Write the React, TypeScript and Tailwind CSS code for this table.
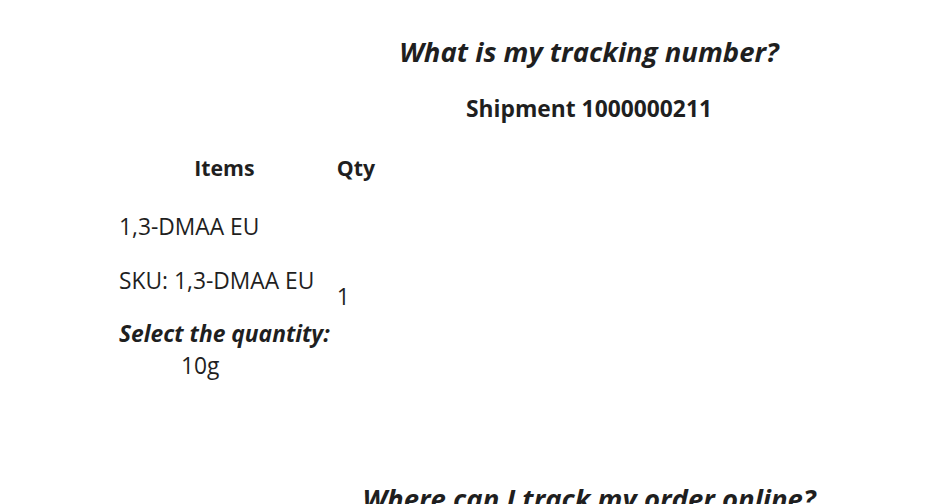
import React from 'react';

const item = {
  name: '1,3-DMAA EU',
  sku: '1,3-DMAA EU',
  option: 'Select the quantity:',
  value: '10g',
  qty: 1,
};

export default function App() {
  return (
    <div className="h-screen overflow-hidden bg-white text-[#1f1f1f] font-['Open_Sans',sans-serif]">
      <div className="pl-[226px] pt-[32px] text-center">
        <h2 className="text-[27.5px] leading-[40px] font-bold italic">What is my tracking number?</h2>
        <h3 className="mt-[22px] text-[22.8px] leading-[30px] font-bold">Shipment 1000000211</h3>
      </div>

      <table className="ml-[119px] mt-[29px] border-collapse">
        <thead>
          <tr>
            <th className="pb-[28px] text-[21.3px] leading-[30px] font-bold">Items</th>
            <th className="pl-[7px] pb-[28px] text-[21.3px] leading-[30px] font-bold">Qty</th>
          </tr>
        </thead>
        <tbody>
          <tr>
            <td className="p-0 align-middle text-[22.8px] leading-[32px]">
              <p>{item.name}</p>
              <p className="mt-[22px]">SKU: {item.sku}</p>
              <p className="mt-[21px] font-bold italic">{item.option}</p>
              <p className="pl-[62px]">{item.value}</p>
            </td>
            <td className="pl-[7px] align-middle text-[22.8px] leading-[32px]">{item.qty}</td>
          </tr>
        </tbody>
      </table>

      <div className="pl-[226px] mt-[97px] text-center">
        <h2 className="text-[27.5px] leading-[40px] font-bold italic">Where can I track my order online?</h2>
      </div>
    </div>
  );
}
